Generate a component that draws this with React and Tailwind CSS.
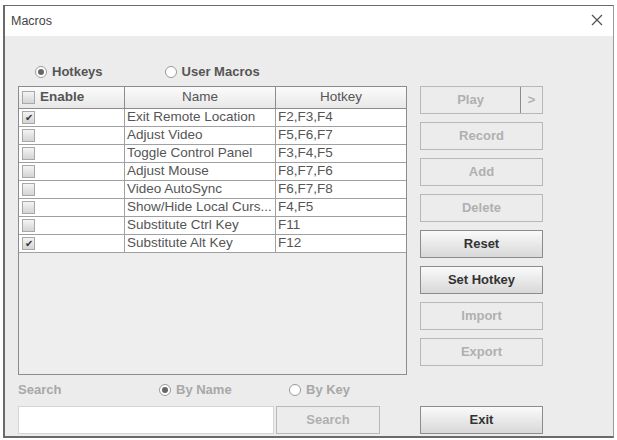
import React, { useState } from 'react';

const macros = [
    { name: 'Exit Remote Location', hotkey: 'F2,F3,F4', enabled: true },
    { name: 'Adjust Video', hotkey: 'F5,F6,F7', enabled: false },
    { name: 'Toggle Control Panel', hotkey: 'F3,F4,F5', enabled: false },
    { name: 'Adjust Mouse', hotkey: 'F8,F7,F6', enabled: false },
    { name: 'Video AutoSync', hotkey: 'F6,F7,F8', enabled: false },
    { name: 'Show/Hide Local Curs...', hotkey: 'F4,F5', enabled: false },
    { name: 'Substitute Ctrl Key', hotkey: 'F11', enabled: false },
    { name: 'Substitute Alt Key', hotkey: 'F12', enabled: true },
];

const Check = ({ checked }) => (
    <span className="flex h-[13px] w-[13px] shrink-0 items-center justify-center border border-[#a8a8a8] bg-gradient-to-b from-[#f4f4f4] to-[#d4d4d4] text-[10px] leading-none text-[#333]">
        {checked ? '✔' : ''}
    </span>
);

const Radio = ({ selected, label, dim }) => (
    <label className={`flex items-center gap-[5px] font-bold ${dim ? 'text-[#a8a8a8]' : 'text-[#555]'}`}>
        <span className="flex h-[12px] w-[12px] items-center justify-center rounded-full border border-[#9a9a9a] bg-white">
            {selected && <span className="h-[6px] w-[6px] rounded-full bg-[#666]" />}
        </span>
        {label}
    </label>
);

// width comes in separately so it never fights with a default width class
const Button = ({ children, enabled, width = 'w-[123px]', className = '' }) => (
    <button
        className={`h-[28px] ${width} border text-[13px] font-bold ${
            enabled
                ? 'border-[#8c8c8c] bg-gradient-to-b from-[#fafafa] to-[#d8d8d8] text-[#333]'
                : 'border-[#b8b8b8] bg-[#ececec] text-[#b0b0b0]'
        } ${className}`}
    >
        {children}
    </button>
);

const App = () => {
    const [rows] = useState(macros);

    return (
        <div className="h-[440px] w-[617px] bg-white pl-[3px] pr-[3px] pt-[5px] pb-[2px] font-['Liberation_Sans',Arial,sans-serif] text-[13px]">
            <div className="flex h-full flex-col border border-l-2 border-[#6a6a6a] border-b-2 border-r-[#9a9a9a]">
                {/* title bar */}
                <div className="flex h-[30px] items-center justify-between bg-white pl-[6px] pr-[10px]">
                    <span className="text-[12.5px] text-[#444]">Macros</span>
                    <svg width="12" height="12" viewBox="0 0 12 12" className="mt-[-2px]">
                        <path d="M1 1 L11 11 M11 1 L1 11" stroke="#555" strokeWidth="1.3" />
                    </svg>
                </div>

                <div className="flex flex-1 flex-col bg-[#ececec] pl-[13px] pt-[26px]">
                    <div className="flex h-[20px] items-center gap-[62px] pl-[17px]">
                        <Radio selected label="Hotkeys" />
                        <Radio label="User Macros" />
                    </div>

                    <div className="mt-[4px] flex gap-[13px]">
                        {/* macro table */}
                        <div className="h-[289px] w-[389px] border border-[#8c8c8c] bg-[#eeeeee]">
                            <div className="flex h-[22px] border-b border-[#8c8c8c] bg-gradient-to-b from-[#fbfbfb] to-[#e8e8e8] text-[13.5px] text-[#555]">
                                <div className="flex w-[106px] items-center gap-[5px] border-r border-[#8c8c8c] pl-[3px] font-bold">
                                    <Check />
                                    Enable
                                </div>
                                <div className="flex w-[151px] items-center justify-center border-r border-[#8c8c8c]">Name</div>
                                <div className="flex flex-1 items-center justify-center">Hotkey</div>
                            </div>
                            {rows.map((row) => (
                                <div key={row.name} className="flex h-[18px] border-b border-[#a0a0a0] bg-white text-[13.5px] text-[#555]">
                                    <div className="flex w-[106px] items-center border-r border-[#a0a0a0] pl-[3px]">
                                        <Check checked={row.enabled} />
                                    </div>
                                    <div className="flex w-[151px] items-center overflow-hidden border-r border-[#a0a0a0] pl-[2px] whitespace-nowrap">{row.name}</div>
                                    <div className="flex flex-1 items-center pl-[2px]">{row.hotkey}</div>
                                </div>
                            ))}
                        </div>

                        {/* action buttons */}
                        <div className="flex flex-col gap-[8px]">
                            <div className="flex h-[28px] w-[123px] border border-[#b8b8b8] text-[13px] font-bold text-[#b0b0b0]">
                                <span className="flex w-[100px] items-center justify-center border-r border-[#8c8c8c]">Play</span>
                                <span className="flex flex-1 items-center justify-center">&gt;</span>
                            </div>
                            <Button>Record</Button>
                            <Button>Add</Button>
                            <Button>Delete</Button>
                            <Button enabled>Reset</Button>
                            <Button enabled>Set Hotkey</Button>
                            <Button>Import</Button>
                            <Button>Export</Button>
                        </div>
                    </div>

                    <div className="mt-[5px] flex h-[20px] items-center">
                        <span className="w-[141px] font-bold text-[#a8a8a8]">Search</span>
                        <div className="w-[130px]">
                            <Radio selected dim label="By Name" />
                        </div>
                        <Radio dim label="By Key" />
                    </div>

                    <div className="mt-[6px] flex items-center">
                        <input className="h-[28px] w-[256px] border border-[#d4d4d4] bg-white outline-none" />
                        <Button width="w-[104px]" className="ml-[2px]">Search</Button>
                        <Button enabled className="ml-[40px]">Exit</Button>
                    </div>
                </div>
            </div>
        </div>
    );
};

export default App;
